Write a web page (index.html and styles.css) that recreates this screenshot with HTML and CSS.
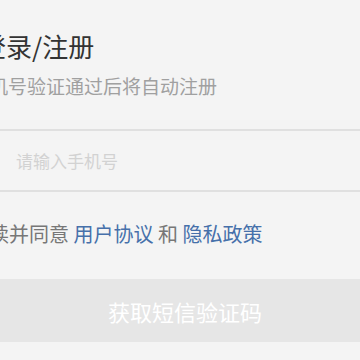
FILE: index.html
```html
<!DOCTYPE html>
<html lang="zh-CN">
<head>
<meta charset="utf-8">
<title>登录/注册</title>
<link rel="stylesheet" href="styles.css">
</head>
<body>
<div class="page">
  <h1 class="title">登录/注册</h1>
  <p class="subtitle">手机号验证通过后将自动注册</p>
  <div class="field">
    <input class="phone" type="tel" placeholder="请输入手机号">
  </div>
  <p class="agree">我已阅读并同意 <a class="link">用户协议</a> 和 <a class="link">隐私政策</a></p>
  <button class="submit" type="button">获取短信验证码</button>
</div>
</body>
</html>
```

FILE: styles.css
```css
html, body {
  margin: 0;
  padding: 0;
  background: #f4f4f4;
  overflow: hidden;
}
.page {
  width: 360px;
  height: 360px;
  font-family: "Noto Sans CJK SC", "Noto Sans", sans-serif;
  display: flex;
  flex-direction: column;
}
.title {
  margin: 28px 0 0 -20px;
  font-size: 26px;
  line-height: 36px;
  font-weight: 400;
  color: #333333;
  white-space: nowrap;
}
.subtitle {
  margin: 9px 0 0 -30px;
  font-size: 19px;
  line-height: 26px;
  color: #a0a0a0;
  white-space: nowrap;
}
.field {
  margin: 30px -20px 0 -20px;
  border-top: 2px solid #e0e0e0;
  border-bottom: 2px solid #e0e0e0;
  height: 59px;
  display: flex;
  align-items: center;
  padding-left: 36px;
}
.phone {
  border: none;
  outline: none;
  background: transparent;
  font-family: inherit;
  font-size: 17px;
  padding: 0;
  width: 300px;
  color: #333;
}
.phone::placeholder {
  color: #d2d2d2;
}
.agree {
  margin: 28px 0 0 -71px;
  font-size: 20px;
  line-height: 28px;
  color: #777777;
  white-space: nowrap;
}
.link {
  color: #4670aa;
}
.submit {
  margin: 31px -20px 0 -10px;
  height: 63px;
  border: none;
  background: #e6e6e6;
  color: #ffffff;
  font-family: inherit;
  font-size: 22px;
  padding: 0;
  flex: none;
}
```
